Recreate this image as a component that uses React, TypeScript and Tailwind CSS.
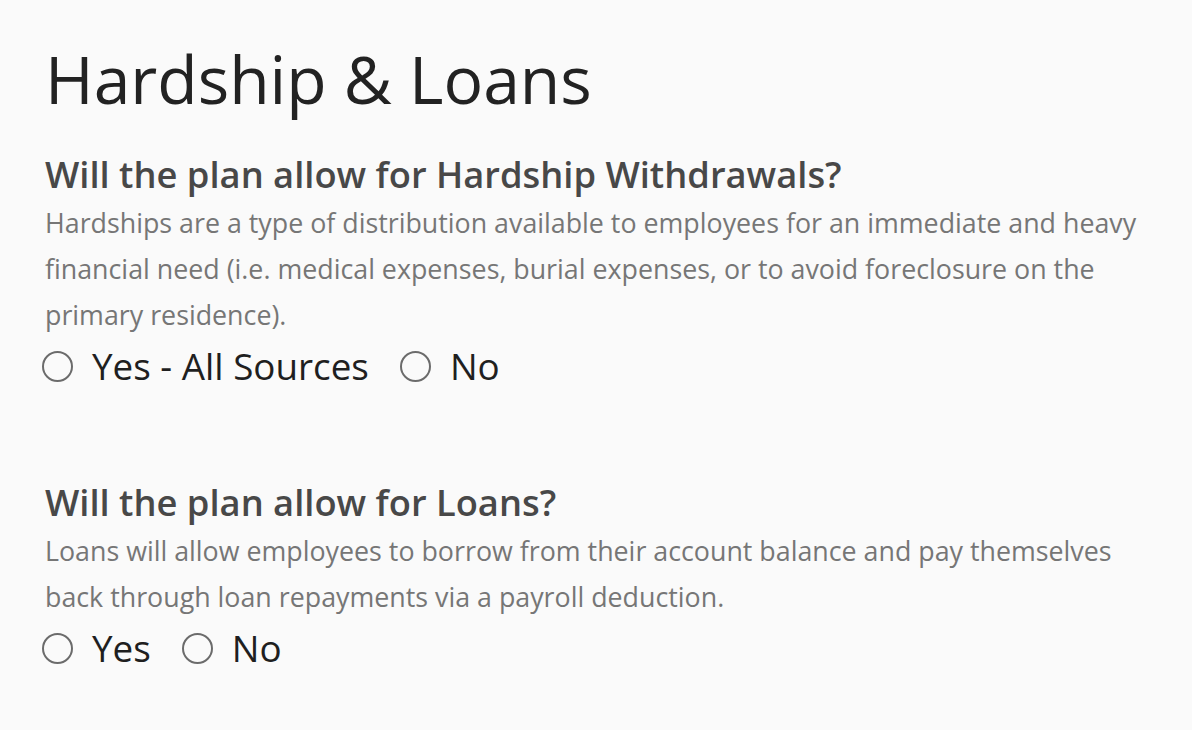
import React, { useState } from 'react';

type Option = { value: string; label: string };

function RadioGroup({ name, options }: { name: string; options: Option[] }) {
  const [selected, setSelected] = useState<string | null>(null);
  return (
    <div className="flex items-center gap-[31px] -ml-[3px]">
      {options.map((o) => (
        <label key={o.value} className="flex items-center gap-[19px] cursor-pointer">
          <input
            type="radio"
            name={name}
            value={o.value}
            checked={selected === o.value}
            onChange={() => setSelected(o.value)}
            className="sr-only"
          />
          <span className="w-[31px] h-[31px] rounded-full border-[2.5px] border-[#6b6b6b] flex items-center justify-center">
            {selected === o.value && <span className="w-[15px] h-[15px] rounded-full bg-[#6b6b6b]" />}
          </span>
          <span className="text-[36.8px] leading-[40px] text-[#1f1f1f]">{o.label}</span>
        </label>
      ))}
    </div>
  );
}

function Question({
  title,
  desc,
  name,
  options,
}: {
  title: string;
  desc: string;
  name: string;
  options: Option[];
}) {
  return (
    <section className="flex flex-col">
      <h2 className="text-[36.3px] leading-[44px] font-semibold text-[#484848]">{title}</h2>
      <p className="mt-[4px] text-[26.8px] leading-[46px] text-[#767676] max-w-[1100px]">{desc}</p>
      <div className="mt-[8px]">
        <RadioGroup name={name} options={options} />
      </div>
    </section>
  );
}

export default function App() {
  return (
    <div
      className="min-h-[730px] bg-[#fafafa] px-[45px] pt-[38px]"
      style={{ fontFamily: '"Open Sans", "Lato", sans-serif' }}
    >
      <h1 className="text-[66px] leading-[80px] text-[#222222]">Hardship &amp; Loans</h1>
      <div className="mt-[34px] flex flex-col gap-[94px]">
        <Question
          name="hardship"
          title="Will the plan allow for Hardship Withdrawals?"
          desc="Hardships are a type of distribution available to employees for an immediate and heavy financial need (i.e. medical expenses, burial expenses, or to avoid foreclosure on the primary residence)."
          options={[
            { value: 'yes', label: 'Yes - All Sources' },
            { value: 'no', label: 'No' },
          ]}
        />
        <Question
          name="loans"
          title="Will the plan allow for Loans?"
          desc="Loans will allow employees to borrow from their account balance and pay themselves back through loan repayments via a payroll deduction."
          options={[
            { value: 'yes', label: 'Yes' },
            { value: 'no', label: 'No' },
          ]}
        />
      </div>
    </div>
  );
}
